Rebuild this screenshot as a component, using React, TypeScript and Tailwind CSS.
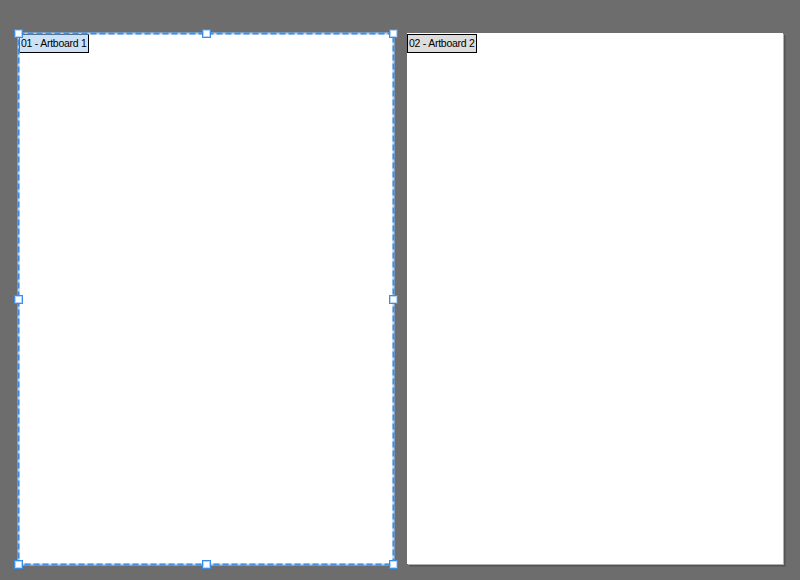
import React from "react";

function Handle({ cls }: { cls: string }) {
  return (
    <div
      className={`absolute z-10 w-[9px] h-[9px] bg-white border border-[#3b8de6] shadow-[inset_0_0_0_1px_#b5d3f5] ${cls}`}
    />
  );
}

export default function App() {
  return (
    <div className="w-[800px] h-[580px] bg-[#6d6d6d] overflow-hidden font-['Liberation_Sans',Arial,sans-serif]">
      <div className="flex gap-[13px] pt-[33px] pl-[18px]">
        <div className="relative w-[376px] h-[532px] bg-white">
          <div className="absolute top-[1px] left-[1px] h-[19px] px-[1px] flex items-center bg-[#cce0f7] border border-black text-[10.5px] tracking-[-0.25px] leading-none text-black">
            01 - Artboard 1
          </div>
          <svg
            className="absolute inset-0 overflow-visible pointer-events-none"
            width="376"
            height="532"
          >
            <rect x="0.5" y="0.5" width="375" height="531" fill="none" stroke="#b5d3f5" strokeWidth="2" />
            <rect x="0.5" y="0.5" width="375" height="531" fill="none" stroke="#3b8de6" strokeWidth="2" strokeDasharray="6 3" />
          </svg>
          <Handle cls="-top-[4px] -left-[4px]" />
          <Handle cls="-top-[4px] left-[184px]" />
          <Handle cls="-top-[4px] -right-[4px]" />
          <Handle cls="top-[262px] -left-[4px]" />
          <Handle cls="top-[262px] -right-[4px]" />
          <Handle cls="-bottom-[4px] -left-[4px]" />
          <Handle cls="-bottom-[4px] left-[184px]" />
          <Handle cls="-bottom-[4px] -right-[4px]" />
        </div>
        <div className="relative w-[376px] h-[531px] bg-white shadow-[1px_1px_0_#b0b0b0,2px_2px_0_#555555,3px_3px_0_#5f5f5f]">
          <div className="absolute top-[1px] left-0 h-[19px] px-[1px] flex items-center bg-[#dcdcdc] border border-black text-[10.5px] tracking-[-0.25px] leading-none text-black">
            02 - Artboard 2
          </div>
        </div>
      </div>
    </div>
  );
}
